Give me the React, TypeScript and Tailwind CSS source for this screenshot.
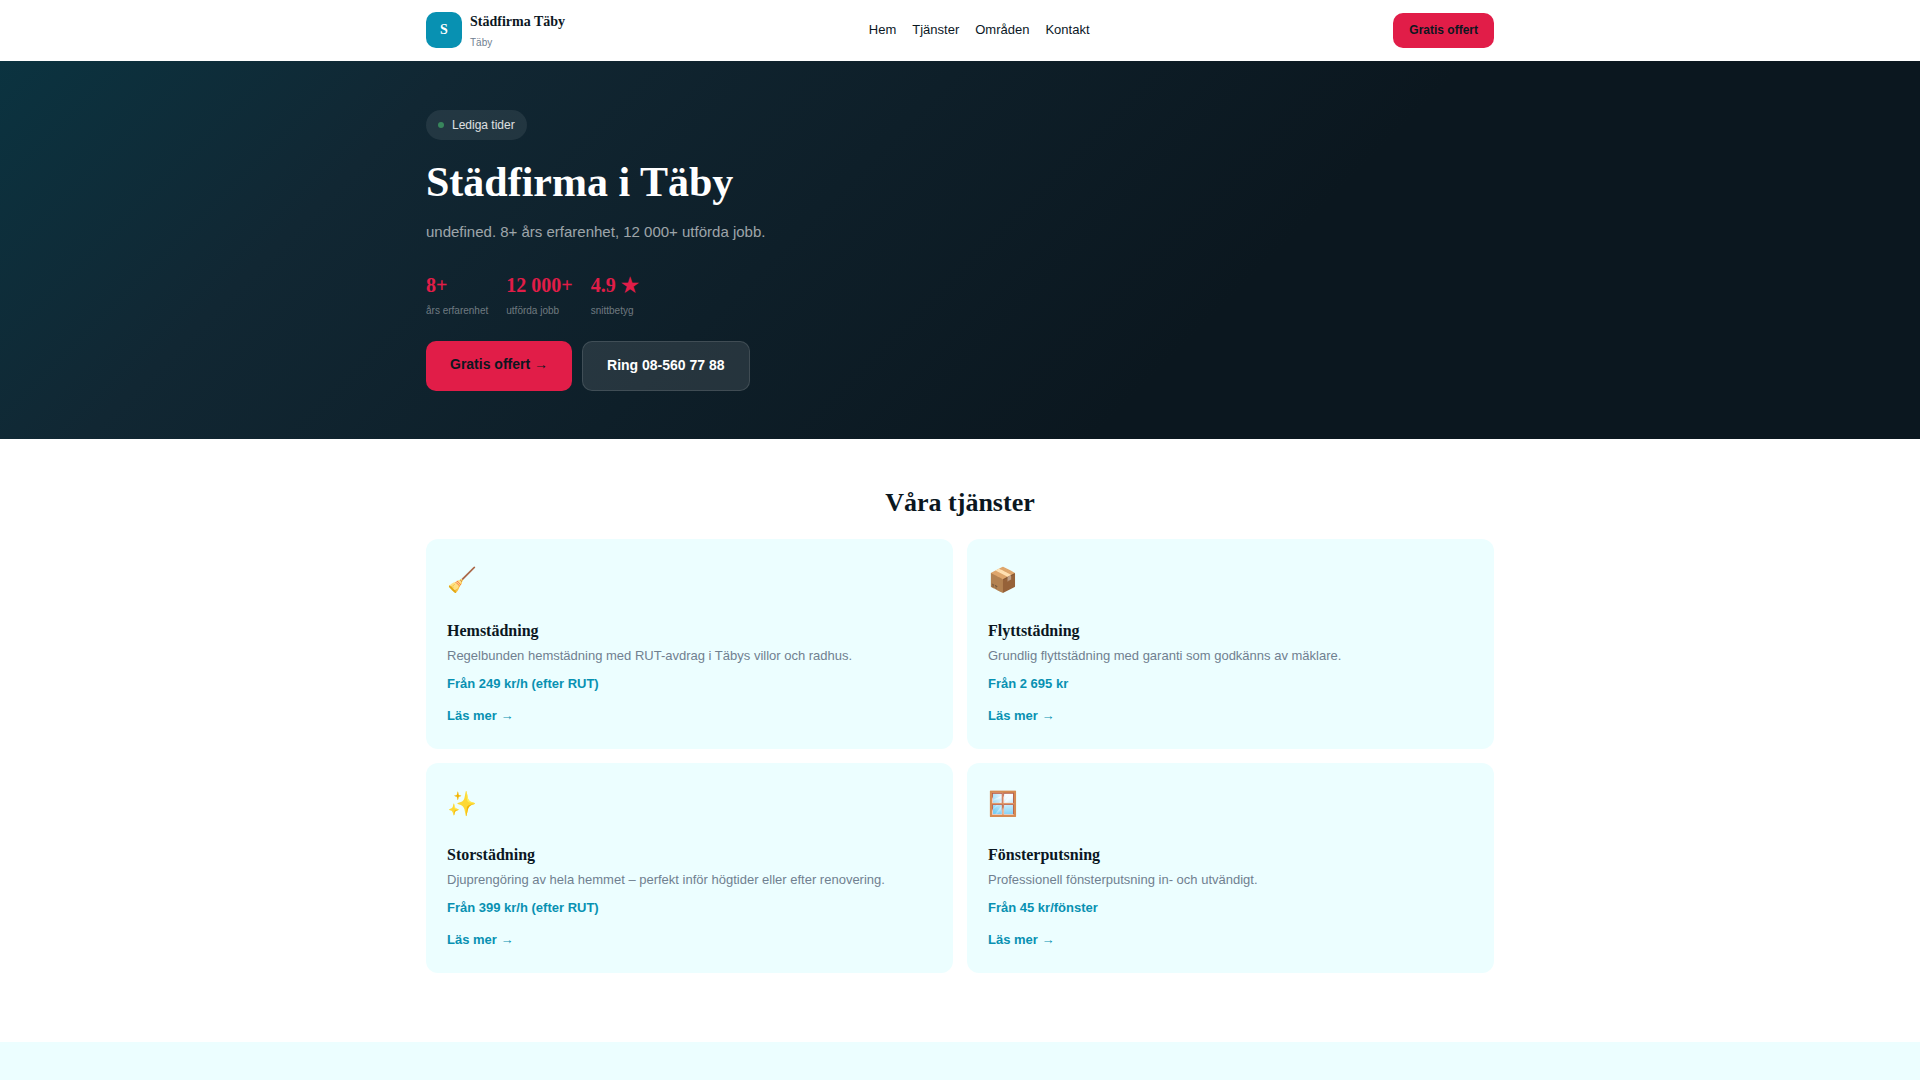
const navLinks = [
  { label: "Hem", href: "#hem" },
  { label: "Tjänster", href: "#tjanster" },
  { label: "Områden", href: "#omraden" },
  { label: "Kontakt", href: "#kontakt" },
]

const stats = [
  { value: "8+", label: "års erfarenhet" },
  { value: "12 000+", label: "utförda jobb" },
  { value: "4.9 ★", label: "snittbetyg" },
]

const services = [
  {
    icon: "🧹",
    title: "Hemstädning",
    text: "Regelbunden hemstädning med RUT-avdrag i Täbys villor och radhus.",
    price: "Från 249 kr/h (efter RUT)",
    href: "#hemstadning",
  },
  {
    icon: "📦",
    title: "Flyttstädning",
    text: "Grundlig flyttstädning med garanti som godkänns av mäklare.",
    price: "Från 2 695 kr",
    href: "#flyttstadning",
  },
  {
    icon: "✨",
    title: "Storstädning",
    text: "Djuprengöring av hela hemmet – perfekt inför högtider eller efter renovering.",
    price: "Från 399 kr/h (efter RUT)",
    href: "#storstadning",
  },
  {
    icon: "🪟",
    title: "Fönsterputsning",
    text: "Professionell fönsterputsning in- och utvändigt.",
    price: "Från 45 kr/fönster",
    href: "#fonsterputsning",
  },
]

function SiteHeader() {
  return (
    <header className="border-b border-white bg-white py-[9px]">
      <div className="mx-auto flex max-w-[1100px] items-center justify-between px-4">
        <a href="#hem" className="flex items-center gap-2">
          <span className="flex h-9 w-9 items-center justify-center rounded-[10px] bg-[#0891b2] font-['Liberation_Serif',serif] text-sm font-bold text-white">
            S
          </span>
          <span className="flex flex-col">
            <span className="font-['Liberation_Serif',serif] text-sm leading-[26px] font-bold">
              Städfirma Täby
            </span>
            <span className="text-[10px] leading-4 text-[#708090]">Täby</span>
          </span>
        </a>
        <nav className="flex gap-4 text-[13px]">
          {navLinks.map((l) => (
            <a key={l.href} href={l.href}>
              {l.label}
            </a>
          ))}
        </nav>
        <a href="#offert" className="rounded-[10px] bg-[#e11d48] px-4 py-2 text-xs leading-[19px] font-bold">
          Gratis offert
        </a>
      </div>
    </header>
  )
}

function Hero() {
  return (
    <section
      id="hem"
      className="bg-[linear-gradient(135deg,#0b3340_0%,#112733_20%,#0b171f_64%,#0b171f_100%)] pt-[49px] pb-12 text-white"
    >
      <div className="mx-auto flex max-w-[1100px] flex-col items-start px-4">
        <span className="inline-flex items-center gap-2 rounded-full bg-white/8 px-3 py-1.5 text-xs leading-[18px] text-white/85">
          <span className="h-1.5 w-1.5 rounded-full bg-[#38865c]" />
          Lediga tider
        </span>
        <h1 className="mt-[19px] font-['Liberation_Serif',serif] text-[42px] leading-[46px] font-bold">
          Städfirma i Täby
        </h1>
        <p className="mt-[15px] text-[15px] leading-6 text-white/60">
          undefined. 8+ års erfarenhet, 12 000+ utförda jobb.
        </p>
        <div className="mt-[25px] flex gap-[18px]">
          {stats.map((s) => (
            <div key={s.label}>
              <div className="font-['Liberation_Serif',serif] text-xl leading-8 font-bold text-[#e11d48]">
                {s.value}
              </div>
              <div className="text-[10px] leading-5 text-white/40">{s.label}</div>
            </div>
          ))}
        </div>
        <div className="mt-5 flex gap-[10px] text-sm leading-5 font-bold">
          <a href="#offert" className="rounded-[10px] bg-[#e11d48] px-6 pt-[13px] pb-[15px] text-[#0b171f]">
            Gratis offert →
          </a>
          <a
            href="tel:085607788"
            className="rounded-[10px] border border-white/12 bg-white/10 px-6 pt-[13px] pb-[15px]"
          >
            Ring 08-560 77 88
          </a>
        </div>
      </div>
    </section>
  )
}

function Services() {
  return (
    <section id="tjanster" className="pt-11 pb-[69px]">
      <div className="mx-auto max-w-[1100px] px-4">
        <h2 className="text-center font-['Liberation_Serif',serif] text-[26px] leading-10 font-bold">
          Våra tjänster
        </h2>
        <div className="mt-4 grid gap-[14px] md:grid-cols-2">
          {services.map((s) => (
            <article key={s.title} className="rounded-xl bg-[#ecfeff] px-[21px] pt-[21px] pb-[23px]">
              <div className="text-2xl leading-10">{s.icon}</div>
              <h3 className="mt-[19px] font-['Liberation_Serif',serif] text-base leading-6 font-bold">
                {s.title}
              </h3>
              <p className="mt-[3px] text-[13px] leading-5 text-[#708090]">{s.text}</p>
              <p className="mt-2 text-[13px] leading-5 font-bold text-[#0891b2]">{s.price}</p>
              <a href={s.href} className="mt-3 block w-fit text-[13px] leading-5 font-bold text-[#0891b2]">
                Läs mer →
              </a>
            </article>
          ))}
        </div>
      </div>
    </section>
  )
}

export default function App() {
  return (
    <div className="flex min-h-screen flex-col bg-white font-['Liberation_Sans',sans-serif] text-[#0b171f]">
      <SiteHeader />
      <Hero />
      <Services />
      <section id="omraden" className="flex-1 bg-[#ecfeff]" />
    </div>
  )
}
